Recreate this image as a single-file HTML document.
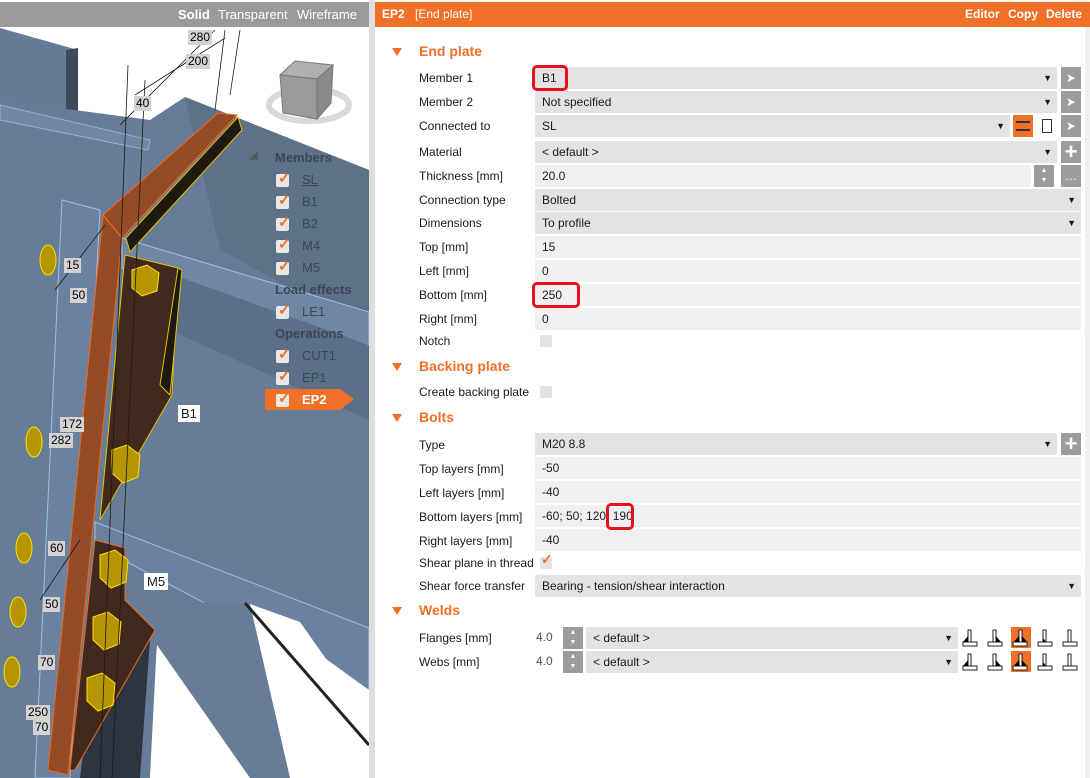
<!DOCTYPE html>
<html><head><meta charset="utf-8"><style>
*{margin:0;padding:0;box-sizing:border-box}
body{width:1090px;height:778px;overflow:hidden;background:#fff;font-family:"Liberation Sans",sans-serif;font-size:12px;color:#1a1a1a;position:relative}
.abs{position:absolute}
.lbl{position:absolute;left:419px;font-size:12px;line-height:22px}
.f{position:absolute;left:535px;height:22px;line-height:22px;padding-left:7px;font-size:12px}
.dd{background:#e3e3e3}
.tx{background:#f0f0f0}
.arr{position:absolute;right:5px;top:0;font-size:9px}
.btn{position:absolute;width:20px;height:22px;background:#9c9c9c;color:#fff;text-align:center;line-height:22px}
.sec{position:absolute;left:419px;color:#f07028;font-weight:bold;font-size:14px}
.tri{position:absolute;left:392px;width:0;height:0;border-left:5px solid transparent;border-right:5px solid transparent;border-top:8px solid #f07028}
.red{position:absolute;border:3px solid #e8101a;border-radius:5px}
.cb{position:absolute;width:12px;height:12px;background:#e3e3e3;border-radius:2px}
.tree{position:absolute;font-size:13px;color:#3b4756}
.tc{position:absolute;width:13px;height:13px;background:#e8e8e8;border-radius:2px}
.tc:after{content:"✓";position:absolute;left:2px;top:-5px;color:#f07028;font-size:15px;font-weight:bold}
.dim{position:absolute;background:#d2d2d2;font-size:12px;padding:0 2px;line-height:15px;color:#000}
</style></head><body>
<!-- left viewport -->
<svg class="abs" style="left:0;top:0" width="369" height="778">
<rect width="369" height="778" fill="#fff"/>
<!-- top-left beam -->
<polygon points="0,28 78,50 78,125 0,105" fill="#657b96"/>
<polygon points="66,50 78,48 78,125 66,122" fill="#3d4a5c"/>
<!-- main steel -->
<polygon points="0,100 150,120 185,97 369,170 369,778 0,778" fill="#667c97"/>
<polygon points="185,97 369,170 369,330 220,250" fill="#5d7189"/>
<polygon points="0,105 150,140 148,150 0,120" fill="#6f87a3" stroke="#8fb0d8" stroke-width="1"/>
<!-- column -->
<polygon points="62,200 100,210 70,778 35,778" fill="#6a82a0" stroke="#9cc0ea" stroke-width="1"/>
<!-- B1 beam -->
<polygon points="122,238 369,312 369,345 122,268" fill="#6f87a3" stroke="#9cc0ea" stroke-width="1"/>
<polygon points="160,270 369,345 369,420 170,330" fill="#5b6f88"/>
<!-- M5 beam -->
<polygon points="95,522 369,628 369,690 95,545" fill="#6b829e" stroke="#9cc0ea" stroke-width="1"/>
<!-- white bottom right -->
<polygon points="150,778 157,640 250,604 369,690 369,778" fill="#fff"/>
<polygon points="125,600 250,604 290,778 180,778 155,640" fill="#667c97"/>
<polygon points="150,778 157,645 250,778" fill="#fff"/>
<polygon points="250,604 300,622 369,720 369,778 310,778" fill="#fff"/>
<line x1="245" y1="603" x2="369" y2="745" stroke="#222" stroke-width="3"/>
<polygon points="90,700 150,640 140,778 80,778" fill="#2e3540"/>
<!-- brown back plates -->
<polygon points="125,255 178,268 172,395 100,520" fill="#412a1d" stroke="#e5c000"/>
<polygon points="160,385 178,268 182,270 170,395" fill="#1e1a10" stroke="#e5c000"/>
<polygon points="95,540 125,548 125,600 155,630 75,770 70,770" fill="#412a1d" stroke="#f06a20"/>
<!-- orange end plate -->
<polygon points="103,215 218,113 237,115 122,238" fill="#944b26" stroke="#f06a20"/>
<polygon points="126,238 238,117 242,130 130,252" fill="#1e1a10" stroke="#e5c000"/>
<polygon points="103,215 122,238 68,775 48,770" fill="#944b26" stroke="#f06a20"/>
<!-- bolts -->
<g fill="#b59500" stroke="#ffe000" stroke-width="1">
<path d="M132,270 l15,-5 l12,8 l-2,18 l-15,5 l-10,-8z"/>
<path d="M112,450 l15,-5 l13,10 l-2,22 l-15,6 l-11,-10z"/>
<path d="M100,555 l15,-5 l13,10 l-2,22 l-15,6 l-11,-10z"/>
<path d="M93,617 l15,-5 l13,10 l-2,22 l-15,6 l-11,-10z"/>
<path d="M87,678 l15,-5 l13,10 l-2,22 l-15,6 l-11,-10z"/>
<ellipse cx="48" cy="260" rx="8" ry="15"/><ellipse cx="34" cy="442" rx="8" ry="15"/><ellipse cx="24" cy="548" rx="8" ry="15"/><ellipse cx="18" cy="612" rx="8" ry="15"/><ellipse cx="12" cy="672" rx="8" ry="15"/>
</g>
<g stroke="#1a1a1a" stroke-width="0.8" fill="none">
<line x1="128" y1="65" x2="100" y2="778"/><line x1="145" y1="80" x2="112" y2="778"/>
<line x1="120" y1="125" x2="215" y2="30"/><line x1="135" y1="95" x2="225" y2="38"/>
<line x1="225" y1="30" x2="215" y2="110"/><line x1="240" y1="30" x2="230" y2="95"/>
<line x1="55" y1="290" x2="105" y2="225"/><line x1="40" y1="600" x2="80" y2="540"/>
</g>
</svg>
<div class="dim" style="left:188px;top:30px">280</div>
<div class="dim" style="left:186px;top:54px">200</div>
<div class="dim" style="left:134px;top:96px">40</div>
<div class="dim" style="left:64px;top:258px">15</div>
<div class="dim" style="left:70px;top:288px">50</div>
<div class="dim" style="left:60px;top:417px">172</div>
<div class="dim" style="left:49px;top:433px">282</div>
<div class="dim" style="left:48px;top:541px">60</div>
<div class="dim" style="left:43px;top:597px">50</div>
<div class="dim" style="left:38px;top:655px">70</div>
<div class="dim" style="left:26px;top:705px">250</div>
<div class="dim" style="left:33px;top:720px">70</div>
<div class="abs" style="left:178px;top:405px;background:#fff;padding:0 3px;font-size:13px;line-height:17px">B1</div>
<div class="abs" style="left:144px;top:573px;background:#fff;padding:0 3px;font-size:13px;line-height:17px">M5</div>
<!-- view cube -->
<svg class="abs" style="left:265px;top:55px" width="95" height="80">
<ellipse cx="44" cy="50" rx="40" ry="16" fill="none" stroke="#d9d9d9" stroke-width="6"/>
<polygon points="15,20 30,6 68,10 52,24" fill="#b0b0b0" stroke="#777"/>
<polygon points="15,20 52,24 52,64 18,58" fill="#9a9a9a" stroke="#777"/>
<polygon points="52,24 68,10 66,48 52,64" fill="#8a8a8a" stroke="#777"/>
</svg>
<!-- tree -->
<div class="tree" style="left:250px;top:150px;font-weight:bold;font-size:10px;color:#555">◢</div>
<div class="tree" style="left:275px;top:150px;font-weight:bold">Members</div>
<div class="tc" style="left:276px;top:174px"></div><div class="tree" style="left:302px;top:172px;text-decoration:underline">SL</div>
<div class="tc" style="left:276px;top:196px"></div><div class="tree" style="left:302px;top:194px">B1</div>
<div class="tc" style="left:276px;top:218px"></div><div class="tree" style="left:302px;top:216px">B2</div>
<div class="tc" style="left:276px;top:240px"></div><div class="tree" style="left:302px;top:238px">M4</div>
<div class="tc" style="left:276px;top:262px"></div><div class="tree" style="left:302px;top:260px">M5</div>
<div class="tree" style="left:275px;top:282px;font-weight:bold">Load effects</div>
<div class="tc" style="left:276px;top:306px"></div><div class="tree" style="left:302px;top:304px">LE1</div>
<div class="tree" style="left:275px;top:326px;font-weight:bold">Operations</div>
<div class="tc" style="left:276px;top:350px"></div><div class="tree" style="left:302px;top:348px">CUT1</div>
<div class="tc" style="left:276px;top:372px"></div><div class="tree" style="left:302px;top:370px">EP1</div>
<svg class="abs" style="left:265px;top:389px" width="90" height="21"><polygon points="0,0 75,0 89,10 75,21 0,21" fill="#f07028"/></svg>
<div class="tc" style="left:276px;top:394px"></div><div class="tree" style="left:302px;top:392px;color:#fff;font-weight:bold">EP2</div>
<!-- toolbar -->
<div class="abs" style="left:0;top:2px;width:369px;height:25px;background:#9a9a9a;color:#fff;font-size:13px;line-height:25px">
<span class="abs" style="left:178px;font-weight:bold">Solid</span><span class="abs" style="left:218px">Transparent</span><span class="abs" style="left:297px">Wireframe</span></div>
<div class="abs" style="left:369px;top:0;width:6px;height:778px;background:#dedede"></div>
<!-- right header -->
<div class="abs" style="left:375px;top:2px;width:715px;height:25px;background:#f07028;color:#fff;font-size:12px;line-height:25px">
<span class="abs" style="left:7px;font-weight:bold">EP2</span><span class="abs" style="left:40px">[End plate]</span>
<span class="abs" style="left:590px;font-weight:bold">Editor</span><span class="abs" style="left:633px;font-weight:bold">Copy</span><span class="abs" style="left:671px;font-weight:bold">Delete</span></div>

<div class="tri" style="top:48px"></div><div class="sec" style="top:43px">End plate</div>
<div class="lbl" style="top:67px">Member 1</div><div class="f dd" style="top:67px;width:522px">B1<span class="arr">▼</span></div><div class="btn" style="left:1061px;top:67px">➤</div>
<div class="lbl" style="top:91px">Member 2</div><div class="f dd" style="top:91px;width:522px">Not specified<span class="arr">▼</span></div><div class="btn" style="left:1061px;top:91px">➤</div>
<div class="lbl" style="top:115px">Connected to</div><div class="f dd" style="top:115px;width:475px">SL<span class="arr">▼</span></div>
<div class="abs" style="left:1013px;top:115px;width:20px;height:22px;background:#f07028"><div class="abs" style="left:3px;top:6px;width:14px;height:10px;border:2px solid #333;border-left:none;border-right:none"></div></div>
<div class="abs" style="left:1042px;top:119px;width:10px;height:14px;border:1px solid #333"></div>
<div class="btn" style="left:1061px;top:115px">➤</div>
<div class="lbl" style="top:141px">Material</div><div class="f dd" style="top:141px;width:522px">&lt; default &gt;<span class="arr">▼</span></div><div class="btn" style="left:1061px;top:141px;font-size:22px;font-weight:bold">+</div>
<div class="lbl" style="top:165px">Thickness [mm]</div><div class="f tx" style="top:165px;width:496px">20.0</div><div class="btn" style="left:1034px;top:165px;font-size:7px;line-height:10px;padding-top:1px">▲<br>▼</div><div class="btn" style="left:1061px;top:165px">…</div>
<div class="lbl" style="top:189px">Connection type</div><div class="f dd" style="top:189px;width:546px">Bolted<span class="arr">▼</span></div>
<div class="lbl" style="top:212px">Dimensions</div><div class="f dd" style="top:212px;width:546px">To profile<span class="arr">▼</span></div>
<div class="lbl" style="top:236px">Top [mm]</div><div class="f tx" style="top:236px;width:546px">15</div>
<div class="lbl" style="top:260px">Left [mm]</div><div class="f tx" style="top:260px;width:546px">0</div>
<div class="lbl" style="top:284px">Bottom [mm]</div><div class="f tx" style="top:284px;width:546px">250</div>
<div class="lbl" style="top:308px">Right [mm]</div><div class="f tx" style="top:308px;width:546px">0</div>
<div class="lbl" style="top:330px">Notch</div><div class="cb" style="left:540px;top:335px"></div>

<div class="tri" style="top:363px"></div><div class="sec" style="top:358px">Backing plate</div>
<div class="lbl" style="top:381px">Create backing plate</div><div class="cb" style="left:540px;top:386px"></div>
<div class="tri" style="top:414px"></div><div class="sec" style="top:409px">Bolts</div>
<div class="lbl" style="top:434px">Type</div><div class="f dd" style="top:433px;width:522px">M20 8.8<span class="arr">▼</span></div><div class="btn" style="left:1061px;top:433px;font-size:22px;font-weight:bold">+</div>
<div class="lbl" style="top:458px">Top layers [mm]</div><div class="f tx" style="top:457px;width:546px">-50</div>
<div class="lbl" style="top:482px">Left layers [mm]</div><div class="f tx" style="top:481px;width:546px">-40</div>
<div class="lbl" style="top:506px">Bottom layers [mm]</div><div class="f tx" style="top:505px;width:546px">-60; 50; 120; 190</div>
<div class="lbl" style="top:530px">Right layers [mm]</div><div class="f tx" style="top:529px;width:546px">-40</div>
<div class="lbl" style="top:552px">Shear plane in thread</div><div class="cb" style="left:540px;top:557px"></div><div class="abs" style="left:541px;top:551px;color:#f07028;font-weight:bold;font-size:14px">✓</div>
<div class="lbl" style="top:575px">Shear force transfer</div><div class="f dd" style="top:575px;width:546px">Bearing - tension/shear interaction<span class="arr">▼</span></div>
<div class="tri" style="top:607px"></div><div class="sec" style="top:602px">Welds</div>
<div class="lbl" style="top:627px">Flanges [mm]</div><div class="abs" style="left:536px;top:627px;line-height:20px;color:#555">4.0</div>
<div class="btn" style="left:563px;top:627px;font-size:7px;line-height:10px;padding-top:1px">▲<br>▼</div>
<div class="f dd" style="left:586px;top:627px;width:372px">&lt; default &gt;<span class="arr">▼</span></div>
<div class="lbl" style="top:651px">Webs [mm]</div><div class="abs" style="left:536px;top:651px;line-height:20px;color:#555">4.0</div>
<div class="btn" style="left:563px;top:651px;font-size:7px;line-height:10px;padding-top:1px">▲<br>▼</div>
<div class="f dd" style="left:586px;top:651px;width:372px">&lt; default &gt;<span class="arr">▼</span></div>
<svg class="abs" style="left:960px;top:626px" width="130" height="48">
<rect x="51" y="1" width="20" height="21" fill="#f07028"/><rect x="51" y="25" width="20" height="21" fill="#f07028"/>
<g id="w" fill="#fff" stroke="#222" stroke-width="1">
<rect x="8" y="4" width="3" height="12"/><rect x="3" y="16" width="14" height="4"/>
<rect x="33" y="4" width="3" height="12"/><rect x="28" y="16" width="14" height="4"/>
<rect x="59" y="4" width="3" height="12"/><rect x="53" y="16" width="14" height="4"/>
<rect x="83" y="4" width="3" height="12"/><rect x="78" y="16" width="14" height="4"/>
<rect x="108" y="4" width="3" height="12"/><rect x="103" y="16" width="14" height="4"/>
</g>
<g fill="#000"><polygon points="8,10 8,16 3,16"/><polygon points="36,10 36,16 41,16"/><polygon points="59,10 59,16 54,16"/><polygon points="62,10 62,16 67,16"/><polygon points="83,12 83,16 86,16"/></g>
<use href="#w" y="24"/>
<g fill="#000" transform="translate(0,24)"><polygon points="8,10 8,16 3,16"/><polygon points="36,10 36,16 41,16"/><polygon points="59,10 59,16 54,16"/><polygon points="62,10 62,16 67,16"/><polygon points="83,12 83,16 86,16"/></g>
</svg>
<!-- red highlights -->
<div class="red" style="left:532px;top:65px;width:36px;height:26px"></div>
<div class="red" style="left:532px;top:282px;width:48px;height:26px"></div>
<div class="red" style="left:606px;top:503px;width:28px;height:27px"></div>
<div class="abs" style="left:1085px;top:27px;width:5px;height:751px;background:#f0f0f0"></div>
</body></html>
